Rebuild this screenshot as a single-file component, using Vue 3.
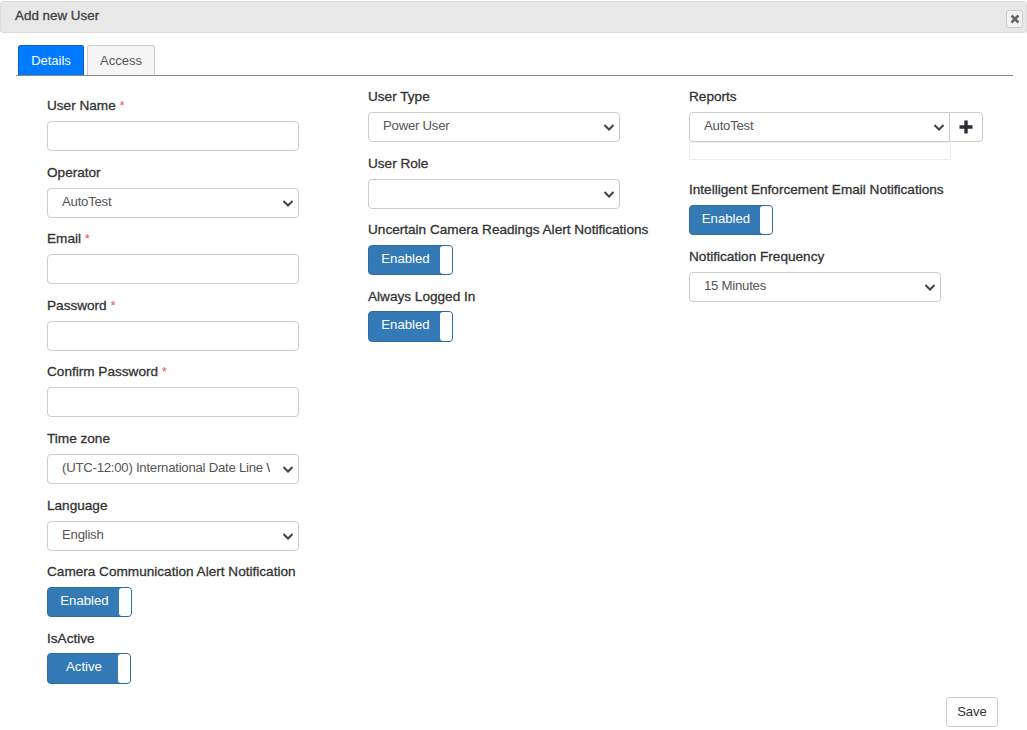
<script setup>
import { ref } from 'vue';

const tab = ref('details');
const zones = ['(UTC-12:00) International Date Line West'];
</script>

<template>
    <div class="page">
        <div class="dialog-title">
            <span>Add new User</span>
            <button class="close-btn" type="button" aria-label="Close">
                <svg width="10" height="10" viewBox="0 0 10 10">
                    <path d="M1.5 1.5 L8.5 8.5 M8.5 1.5 L1.5 8.5" stroke="#666" stroke-width="2.6" fill="none" />
                </svg>
            </button>
        </div>

        <div class="tabs">
            <a :class="['tab', { active: tab === 'details' }]" @click="tab = 'details'">Details</a>
            <a :class="['tab', { active: tab === 'access' }]" @click="tab = 'access'">Access</a>
        </div>

        <div class="columns">
            <div class="col col-first">
                <div class="group">
                    <label>User Name <i>*</i></label>
                    <input class="control" type="text" />
                </div>
                <div class="group">
                    <label>Operator</label>
                    <select class="control"><option>AutoTest</option></select>
                </div>
                <div class="group">
                    <label>Email <i>*</i></label>
                    <input class="control" type="text" />
                </div>
                <div class="group">
                    <label>Password <i>*</i></label>
                    <input class="control" type="password" />
                </div>
                <div class="group">
                    <label>Confirm Password <i>*</i></label>
                    <input class="control" type="password" />
                </div>
                <div class="group">
                    <label>Time zone</label>
                    <select class="control">
                        <option v-for="z in zones" :key="z">{{ z }}</option>
                    </select>
                </div>
                <div class="group">
                    <label>Language</label>
                    <select class="control"><option>English</option></select>
                </div>
                <div class="group">
                    <label>Camera Communication Alert Notification</label>
                    <div class="toggle"><span>Enabled</span><b></b></div>
                </div>
                <div class="group">
                    <label>IsActive</label>
                    <div class="toggle toggle-short"><span>Active</span><b></b></div>
                </div>
            </div>

            <div class="col">
                <div class="group">
                    <label>User Type</label>
                    <select class="control"><option>Power User</option></select>
                </div>
                <div class="group">
                    <label>User Role</label>
                    <select class="control"><option></option></select>
                </div>
                <div class="group">
                    <label>Uncertain Camera Readings Alert Notifications</label>
                    <div class="toggle"><span>Enabled</span><b></b></div>
                </div>
                <div class="group">
                    <label>Always Logged In</label>
                    <div class="toggle"><span>Enabled</span><b></b></div>
                </div>
            </div>

            <div class="col">
                <div class="group reports">
                    <label>Reports</label>
                    <div class="input-group">
                        <select class="control"><option>AutoTest</option></select>
                        <button class="add-btn" type="button" aria-label="Add">
                            <svg width="14" height="14" viewBox="0 0 14 14">
                                <path d="M7 0.5 V13.5 M0.5 7 H13.5" stroke="#2b2b3a" stroke-width="3.4" fill="none" />
                            </svg>
                        </button>
                    </div>
                    <div class="selected-list"></div>
                </div>
                <div class="group">
                    <label>Intelligent Enforcement Email Notifications</label>
                    <div class="toggle toggle-short"><span>Enabled</span><b></b></div>
                </div>
                <div class="group">
                    <label>Notification Frequency</label>
                    <select class="control"><option>15 Minutes</option></select>
                </div>
            </div>
        </div>

        <button class="save-btn" type="button">Save</button>
    </div>
</template>

<style>
body {
    margin: 0;
    background: #fff;
}
</style>

<style scoped>
.page {
    height: 730px;
    overflow: hidden;
    position: relative;
    font-family: "Liberation Sans", Arial, sans-serif;
    font-size: 13.6px;
    line-height: 20px;
    color: #333;
}

.dialog-title {
    margin-top: 1px;
    height: 30px;
    padding: 0 3px 0 14px;
    display: flex;
    align-items: center;
    justify-content: space-between;
    background: #e8e8e8;
    border: 1px solid #dcdcdc;
    border-radius: 3px;
    font-size: 13.4px;
    color: #444;
}

.dialog-title span {
    margin-top: -3px;
    -webkit-text-stroke: 0.35px #444;
}

.close-btn {
    width: 17px;
    height: 18px;
    margin-top: 4px;
    padding: 0;
    display: flex;
    align-items: center;
    justify-content: center;
    background: #f2f2f2;
    border: 1px solid #ccc;
    border-radius: 3px;
}

.tabs {
    display: flex;
    gap: 3px;
    margin: 12px 14px 0 16px;
    padding-left: 2px;
    height: 30px;
    border-bottom: 1px solid #888;
}

.tab {
    width: 66px;
    box-sizing: border-box;
    height: 30px;
    line-height: 30px;
    text-align: center;
    font-size: 13px;
    background: #f5f5f5;
    border: 1px solid #ccc;
    border-bottom: 0;
    border-radius: 3px 3px 0 0;
    color: #555;
}

.tab.active {
    background: #007bff;
    border-color: #0062cc;
    color: #fff;
}

.tab:not(.active) {
    width: 68px;
}

.columns {
    display: grid;
    grid-template-columns: 321px 321px 321px;
    padding: 10px 0 0 47px;
}

.col-first {
    padding-top: 9px;
}

.group {
    margin-bottom: 10.6px;
}

.group label {
    display: block;
    height: 20px;
    line-height: 22px;
    margin-bottom: 6px;
    white-space: nowrap;
    color: #333;
    -webkit-text-stroke: 0.3px #333;
}

.group label i {
    font-style: normal;
    font-size: 13px;
    color: #e55;
    -webkit-text-stroke: 0;
}

.control {
    display: block;
    box-sizing: border-box;
    width: 252px;
    height: 30px;
    background: #fff;
    border: 1px solid #ccc;
    border-radius: 4px;
    font-family: inherit;
    font-size: 13.2px;
    letter-spacing: -0.25px;
    color: #555;
}

select.control {
    appearance: none;
    padding: 0 28px 2.5px 14px;
    background-image: url("data:image/svg+xml,%3Csvg xmlns='http://www.w3.org/2000/svg' width='10' height='7' viewBox='0 0 10 7'%3E%3Cpath d='M0.5 1 L5 5.5 L9.5 1' stroke='%23444' stroke-width='2' fill='none'/%3E%3C/svg%3E");
    background-repeat: no-repeat;
    background-position: right 5px top 11px;
}

.toggle {
    display: flex;
    box-sizing: border-box;
    width: 85px;
    height: 30.6px;
    margin-top: -0.6px;
    background: #337ab7;
    border: 1px solid #2e6da4;
    border-radius: 4px;
    color: #fff;
    font-size: 13.2px;
}

.toggle span {
    flex: 1;
    text-align: center;
    line-height: 25px;
    padding-left: 2px;
}

.toggle b {
    width: 12px;
    background: #fff;
    border-radius: 3px;
}

.toggle-short {
    width: 84px;
}

.input-group {
    display: flex;
}

.input-group .control {
    width: 261px;
    border-radius: 4px 0 0 4px;
}

.add-btn {
    width: 34px;
    height: 30px;
    margin-left: -1px;
    padding: 0;
    display: flex;
    align-items: center;
    justify-content: center;
    background: #fff;
    border: 1px solid #ccc;
    border-radius: 0 4px 4px 0;
}

.selected-list {
    box-sizing: border-box;
    width: 262px;
    height: 18px;
    background: #fff;
    border: 1px solid #eee;
}

.reports {
    margin-bottom: 19.4px;
}

.save-btn {
    position: absolute;
    right: 29px;
    top: 697px;
    width: 52px;
    height: 30px;
    padding: 0 0 2px;
    background: #fff;
    border: 1px solid #ccc;
    border-radius: 3px;
    font-family: inherit;
    font-size: 13px;
    color: #333;
}
</style>
